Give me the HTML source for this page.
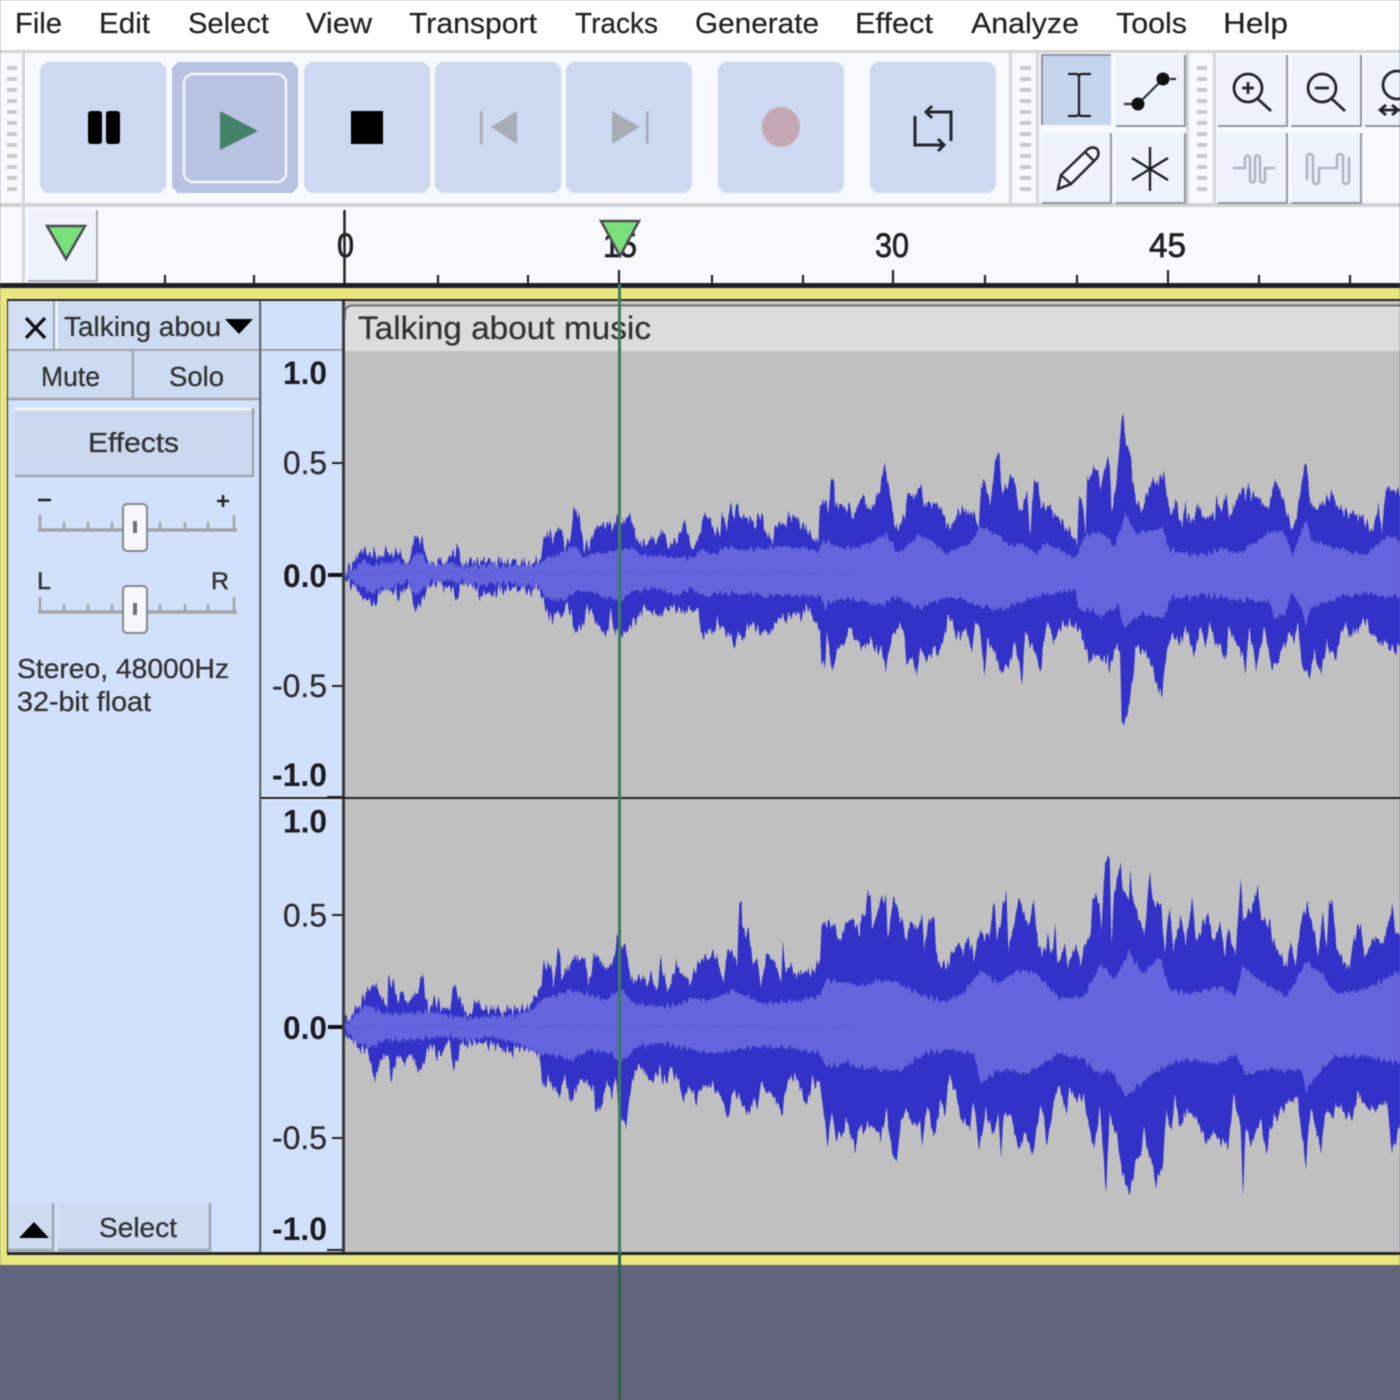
<!DOCTYPE html>
<html><head><meta charset="utf-8"><title>Audacity</title>
<style>
html,body{margin:0;padding:0;background:#62647e;width:1400px;height:1400px;overflow:hidden}
svg{display:block}
#root{filter:blur(.55px)}
text{font-family:"Liberation Sans",sans-serif;fill:#2a2a2e}
.m{font-size:29px;fill:#222;stroke:#222;stroke-width:.2px}
.s{font-size:28px;fill:#333;stroke:#333;stroke-width:.3px}
.r{font-size:32px;fill:#2d2d33;stroke:#2d2d33;stroke-width:.3px}
.l{font-size:34px;fill:#222;stroke:#222;stroke-width:.7px}
.b{font-weight:bold;fill:#1c1c22;stroke:none}
.o{fill:#3232c8}.i{fill:#6464dc}
</style></head><body>
<svg id="root" width="1400" height="1400" viewBox="0 0 1400 1400" xmlns="http://www.w3.org/2000/svg">
<defs>
<filter id="jo" filterUnits="userSpaceOnUse" x="345" y="351" width="1055" height="901" color-interpolation-filters="sRGB">
<feTurbulence type="fractalNoise" baseFrequency="0.42 0.002" numOctaves="2" seed="3" result="n"/>
<feColorMatrix in="n" type="matrix" values="1 0 0 0 0  0 0 0 0 .5  0 0 0 0 .5  0 0 0 0 1" result="m"/>
<feDisplacementMap in="SourceGraphic" in2="m" scale="24" xChannelSelector="G" yChannelSelector="R"/>
</filter>
<filter id="ji" filterUnits="userSpaceOnUse" x="345" y="351" width="1055" height="901" color-interpolation-filters="sRGB">
<feTurbulence type="fractalNoise" baseFrequency="0.36 0.002" numOctaves="2" seed="11" result="n"/>
<feColorMatrix in="n" type="matrix" values="1 0 0 0 0  0 0 0 0 .5  0 0 0 0 .5  0 0 0 0 1" result="m"/>
<feDisplacementMap in="SourceGraphic" in2="m" scale="14" xChannelSelector="G" yChannelSelector="R"/>
</filter>
</defs>
<rect width="1400" height="1400" fill="#62647e"/>
<!-- menu -->
<rect width="1400" height="51" fill="#fff"/>
<rect y="50" width="1400" height="3" fill="#d4d4d4"/>
<text class="m" x="15" y="33" textLength="47" lengthAdjust="spacingAndGlyphs">File</text>
<text class="m" x="99" y="33" textLength="51" lengthAdjust="spacingAndGlyphs">Edit</text>
<text class="m" x="188" y="33" textLength="81" lengthAdjust="spacingAndGlyphs">Select</text>
<text class="m" x="306" y="33" textLength="66" lengthAdjust="spacingAndGlyphs">View</text>
<text class="m" x="409" y="33" textLength="128" lengthAdjust="spacingAndGlyphs">Transport</text>
<text class="m" x="575" y="33" textLength="83" lengthAdjust="spacingAndGlyphs">Tracks</text>
<text class="m" x="695" y="33" textLength="124" lengthAdjust="spacingAndGlyphs">Generate</text>
<text class="m" x="855" y="33" textLength="78" lengthAdjust="spacingAndGlyphs">Effect</text>
<text class="m" x="971" y="33" textLength="108" lengthAdjust="spacingAndGlyphs">Analyze</text>
<text class="m" x="1116" y="33" textLength="71" lengthAdjust="spacingAndGlyphs">Tools</text>
<text class="m" x="1223" y="33" textLength="65" lengthAdjust="spacingAndGlyphs">Help</text>
<!-- toolbar -->
<rect y="53" width="1400" height="231" fill="#f8f9ff"/>
<rect y="203" width="1400" height="4" fill="#d2d2d4"/>
<rect x="22" y="53" width="3" height="231" fill="#d6d6d8"/>
<rect x="1009" y="53" width="3" height="151" fill="#d6d6d8"/>
<rect x="1036" y="53" width="3" height="151" fill="#d6d6d8"/>
<rect x="1186" y="53" width="3" height="151" fill="#d6d6d8"/>
<rect x="1213" y="53" width="3" height="151" fill="#d6d6d8"/>
<g stroke="#c9c9cc" stroke-width="4" fill="none">
<path d="M7 68H17M7 79H17M7 90H17M7 101H17M7 112H17M7 123H17M7 134H17M7 145H17M7 156H17M7 167H17M7 178H17M7 189H17"/>
<path d="M1020 68H1031M1020 79H1031M1020 90H1031M1020 101H1031M1020 112H1031M1020 123H1031M1020 134H1031M1020 145H1031M1020 156H1031M1020 167H1031M1020 178H1031M1020 189H1031"/>
<path d="M1197 68H1207M1197 79H1207M1197 90H1207M1197 101H1207M1197 112H1207M1197 123H1207M1197 134H1207M1197 145H1207M1197 156H1207M1197 167H1207M1197 178H1207M1197 189H1207"/>
</g>
<!-- transport buttons -->
<g fill="#cdd9f0">
<path d="M46 62H160L166 68V187L160 193H46L40 187V68Z"/>
<path fill="#b8c2e2" d="M178 62H292L298 68V187L292 193H178L172 187V68Z"/>
<path d="M310 62H424L430 68V187L424 193H310L304 187V68Z"/>
<path d="M441 62H555L561 68V187L555 193H441L435 187V68Z"/>
<path d="M572 62H686L692 68V187L686 193H572L566 187V68Z"/>
<path d="M724 62H838L844 68V187L838 193H724L718 187V68Z"/>
<path d="M876 62H990L996 68V187L990 193H876L870 187V68Z"/>
</g>
<rect x="184" y="74" width="102" height="108" rx="9" fill="none" stroke="#f4f6ff" stroke-width="2.5"/>
<rect x="88" y="111" width="14" height="33" rx="3" fill="#000"/><rect x="106" y="111" width="14" height="33" rx="3" fill="#000"/>
<path d="M220 111L258 131L220 150Z" fill="#44826a"/>
<rect x="351" y="111" width="32" height="33" fill="#000"/>
<rect x="480" y="111" width="2.5" height="33" fill="#a7acb5"/><path d="M517 111V144L491 127Z" fill="#a7acb5"/>
<rect x="646" y="111" width="2.5" height="33" fill="#a7acb5"/><path d="M612 111V144L640 127Z" fill="#a7acb5"/>
<ellipse cx="781" cy="127" rx="19" ry="20" fill="#c6a7b6"/>
<g fill="none" stroke="#25282e" stroke-width="3">
<path d="M926 112H951V141M915 116V145H942"/>
<path d="M932 106L926 112L932 118M938 139L944 145L938 151"/>
</g>
<!-- tools buttons -->
<g fill="#edf2fd">
<rect x="1116" y="55" width="69" height="71"/><rect x="1042" y="133" width="69" height="70"/><rect x="1116" y="133" width="69" height="70"/>
<rect x="1218" y="55" width="69" height="71"/><rect x="1291" y="55" width="69" height="71"/><rect x="1365" y="55" width="35" height="71"/>
<rect x="1218" y="133" width="69" height="70"/><rect x="1291" y="133" width="69" height="70"/>
</g>
<rect x="1042" y="55" width="69" height="70" fill="#c5d5ee"/>
<path d="M1042 125V55H1111" fill="none" stroke="#8d93a0" stroke-width="2"/>
<g fill="none" stroke="#9197a3" stroke-width="2">
<path d="M1116 126H1185V55M1042 203H1111V133M1116 203H1185V133M1218 126H1287V55M1291 126H1361V55M1365 126H1400M1218 203H1287V133M1291 203H1361V133"/>
</g>
<g fill="none" stroke="#1d1d20" stroke-width="2.2">
<path d="M1068 74H1076Q1079 74 1079 77V113Q1079 116 1076 116H1068M1091 74H1082Q1079 74 1079 77M1091 116H1082Q1079 116 1079 113"/>
<path d="M1138 104L1163 79M1124 104H1132M1170 79H1176" stroke="#333"/>
<path d="M1150 147V191M1132 158L1168 180M1168 158L1132 180" stroke-width="2.3"/>
<path d="M1058 189L1061 175L1088 149Q1093 146 1097 149Q1100 153 1097 158L1071 184Z" fill="#f4f7ff" stroke="#2a2a2e" stroke-width="2.6"/>
<path d="M1061 175L1071 184M1085 152L1094 161" stroke="#2a2a2e" stroke-width="2.4"/>
</g>
<g fill="none" stroke="#25272c" stroke-width="2.8">
<circle cx="1248" cy="88" r="14"/><path d="M1258 99L1271 111M1242 88H1254M1248 82V94"/>
<circle cx="1322" cy="88" r="14"/><path d="M1332 99L1345 111M1315 88H1329"/>
<circle cx="1397" cy="85" r="14"/><path d="M1380 110H1400M1386 105L1380 110L1386 115M1392 105L1398 110L1392 115"/>
</g>
<circle cx="1138" cy="104" r="6.500" fill="#111"/><circle cx="1163" cy="79" r="6.500" fill="#111"/>
<g fill="none" stroke="#b2b6c1" stroke-width="2.6">
<path d="M1233 168H1245V158A2.500 2.500 0 0 1 1250 158V180A2.500 2.500 0 0 0 1255 180V158A2.500 2.500 0 0 1 1260 158V180A2.500 2.500 0 0 0 1265 180V168H1275"/>
<path d="M1307 180V157A3 3 0 0 1 1313 157V181A3 3 0 0 0 1319 181V168H1337V157A3 3 0 0 1 1343 157V181A3 3 0 0 0 1349 181V157"/>
</g>
<!-- ruler -->
<rect x="28" y="210" width="69" height="71" fill="#edf2fd"/>
<path d="M28 281H97V210" fill="none" stroke="#a9adb6" stroke-width="2"/>
<path d="M47 226H85L66 259Z" fill="#7be07b" stroke="#4c4c50" stroke-width="2.5"/>
<g stroke="#222" stroke-width="2.2">
<path d="M344.500 210V284" stroke-width="2.500"/>
<path d="M165 275V283M254 275V283M438 275V283M528 275V283M712 275V283M803 275V283M985 275V283M1077 275V283M1259 275V283M1350 275V283"/>
<path d="M619 270V283M893 270V283M1168 270V283"/>
</g>
<text class="l" x="337" y="257" textLength="17" lengthAdjust="spacingAndGlyphs">0</text>
<text class="l" x="603" y="257" textLength="34" lengthAdjust="spacingAndGlyphs">15</text>
<text class="l" x="875" y="257" textLength="34" lengthAdjust="spacingAndGlyphs">30</text>
<text class="l" x="1149" y="257" textLength="37" lengthAdjust="spacingAndGlyphs">45</text>
<path d="M601 221H639L620 256Z" fill="#7be07b" stroke="#4c4c50" stroke-width="2.5"/>
<!-- track frame -->
<rect y="283" width="1400" height="5" fill="#1e1e2a"/>
<rect y="288" width="1400" height="977" fill="#e9e67f"/>
<rect x="7" y="299" width="1393" height="956" fill="#26262a"/>
<!-- panel -->
<rect x="8" y="301" width="252" height="951" fill="#d2e1fb"/>
<rect x="261" y="301" width="81" height="951" fill="#d2e1fb"/>
<path d="M260.200 301V1252" stroke="#55565c" stroke-width="2"/>
<rect x="8" y="301" width="47" height="48" fill="#d2dff5"/>
<rect x="55" y="301" width="3" height="48" fill="#edf2fd"/>
<rect x="58" y="301" width="201" height="48" fill="#cddbf1"/>
<path d="M54 301V350M8 350H259" stroke="#9fa4ae" stroke-width="2"/>
<rect x="8" y="351" width="124" height="47" fill="#cddbf1"/><rect x="135" y="351" width="124" height="47" fill="#cddbf1"/>
<path d="M133 351V398M8 399H259" stroke="#9fa4ae" stroke-width="2.500"/>
<path d="M261 350H342" stroke="#9fa4ae" stroke-width="2"/>
<path d="M26 318L45 338M45 318L26 338" stroke="#111" stroke-width="3.200"/>
<text class="s" x="64" y="336" textLength="157" lengthAdjust="spacingAndGlyphs">Talking abou</text>
<path d="M225 319H253L239 334Z" fill="#000"/>
<text class="s" x="41" y="386" textLength="59" lengthAdjust="spacingAndGlyphs">Mute</text>
<text class="s" x="169" y="386" textLength="55" lengthAdjust="spacingAndGlyphs">Solo</text>
<rect x="15" y="408" width="238" height="69" fill="#cbd8ef"/>
<path d="M15 409H253" stroke="#eef3fd" stroke-width="3"/>
<path d="M15 476H253V408" fill="none" stroke="#9ea4b0" stroke-width="2.500"/>
<text class="s" x="88" y="452" textLength="91" lengthAdjust="spacingAndGlyphs">Effects</text>
<!-- sliders -->
<path d="M38 500H51M217 501H229M223 495V507" stroke="#222" stroke-width="2.500"/>
<text x="37" y="589" font-size="24" textLength="14" lengthAdjust="spacingAndGlyphs" style="fill:#333;stroke:#333;stroke-width:.5px">L</text>
<text x="211" y="589" font-size="24" textLength="18" lengthAdjust="spacingAndGlyphs" style="fill:#333;stroke:#333;stroke-width:.5px">R</text>
<g fill="none" stroke="#a2a4a8" stroke-width="2.500">
<path d="M40 515V530M64 522V530M88 522V530M112 522V530M160 522V530M185 522V530M208 522V530M234 515V530"/>
<path d="M38 530H237" stroke-width="3.500"/>
<path d="M40 597V612M64 604V612M88 604V612M112 604V612M160 604V612M185 604V612M208 604V612M234 597V612"/>
<path d="M38 612H237" stroke-width="3.500"/>
</g>
<rect x="123" y="504" width="24" height="47" rx="4" fill="#f6f7fb" stroke="#85878c" stroke-width="2"/><rect x="133" y="521" width="4" height="12" fill="#70747c"/>
<rect x="123" y="586" width="24" height="47" rx="4" fill="#f6f7fb" stroke="#85878c" stroke-width="2"/><rect x="133" y="603" width="4" height="12" fill="#70747c"/>
<text class="s" x="17" y="678" textLength="212" lengthAdjust="spacingAndGlyphs">Stereo, 48000Hz</text>
<text class="s" x="17" y="711" textLength="134" lengthAdjust="spacingAndGlyphs">32-bit float</text>
<!-- bottom buttons -->
<rect x="8" y="1203" width="45" height="47" fill="#cddbf1"/><rect x="58" y="1203" width="152" height="47" fill="#cddbf1"/>
<path d="M8 1250H53V1203M58 1250H210V1203" fill="none" stroke="#9ea4b0" stroke-width="2.500"/>
<path d="M19 1238L34 1222L49 1238Z" fill="#000"/>
<text class="s" x="99" y="1237" textLength="78" lengthAdjust="spacingAndGlyphs">Select</text>
<!-- vertical ruler -->
<g>
<text class="r b" x="283" y="384" textLength="44" lengthAdjust="spacingAndGlyphs">1.0</text>
<text class="r" x="283" y="474" textLength="44" lengthAdjust="spacingAndGlyphs">0.5</text>
<text class="r b" x="283" y="587" textLength="44" lengthAdjust="spacingAndGlyphs">0.0</text>
<text class="r" x="272" y="697" textLength="55" lengthAdjust="spacingAndGlyphs">-0.5</text>
<text class="r b" x="272" y="786" textLength="55" lengthAdjust="spacingAndGlyphs">-1.0</text>
<text class="r b" x="283" y="832.500" textLength="44" lengthAdjust="spacingAndGlyphs">1.0</text>
<text class="r" x="283" y="926.500" textLength="44" lengthAdjust="spacingAndGlyphs">0.5</text>
<text class="r b" x="283" y="1039" textLength="44" lengthAdjust="spacingAndGlyphs">0.0</text>
<text class="r" x="272" y="1149" textLength="55" lengthAdjust="spacingAndGlyphs">-0.5</text>
<text class="r b" x="272" y="1240" textLength="55" lengthAdjust="spacingAndGlyphs">-1.0</text>
</g>
<path d="M332 463H342M332 686H342M327 797H342M332 915H342M332 1138H342M327 1250H342" stroke="#222" stroke-width="2"/>
<path d="M328 575H342M328 1027H342" stroke="#111" stroke-width="4"/>
<!-- wave area -->
<rect x="342" y="301" width="3" height="951" fill="#3a3a3e"/>
<rect x="345" y="301" width="1055" height="5" fill="#c6c6c6"/>
<rect x="345" y="351" width="1055" height="901" fill="#c0c0c0"/>
<rect x="345" y="306" width="1055" height="45" fill="#dcdcdc"/>
<path d="M345 320V312Q345 307 351 305.500H1400" fill="none" stroke="#666" stroke-width="1.800"/>
<text x="358" y="339" font-size="32" textLength="293" lengthAdjust="spacingAndGlyphs" style="fill:#333;stroke:#333;stroke-width:.25px">Talking about music</text>
<svg x="345" y="351" width="1055" height="901" viewBox="345 351 1055 901">
<g filter="url(#jo)">
<!-- outer channel 1 -->
<g class="o" transform="translate(340,400) scale(.338,.3333)">
<path d="M15,520 25,500 40,490 50,470 62,445 75,445 82,470 95,465 102,450 115,478 130,465 135,442 145,465 155,458 175,458 190,485 208,490 213,430 222,408 242,420 252,460 265,495 285,495 292,478 305,490 320,480 330,462 340,470 345,432 352,440 356,500 372,490 385,482 400,490 418,475 432,490 440,478 460,490 480,485 500,490 515,475 530,492 555,488 570,492 590,485 600,440 607,405 618,400 630,420 640,395 655,385 665,440 685,400 690,325 700,335 715,385 722,445 745,425 757,375 775,380 790,368 805,385 820,358 840,365 860,345 868,385 885,430 905,435 925,410 935,435 950,392 962,400 970,440 1000,420 1020,358 1030,410 1040,445 1060,420 1075,345 1092,350 1105,395 1125,395 1130,345 1145,380 1155,310 1163,350 1178,310 1185,355 1215,350 1225,385 1240,345 1252,345 1255,400 1270,400 1280,430 1288,378 1320,370 1325,350 1345,350 1365,375 1380,385 1395,410 1415,425 1420,320 1435,295 1445,340 1452,240 1462,240 1465,320 1490,310 1500,340 1508,305 1515,360 1525,330 1550,285 1560,330 1568,320V520H15Z"/>
<path d="M15,525 25,545 50,565 70,590 100,620 115,585 135,565 165,570 170,605 190,570 208,545 215,590 222,635 235,605 250,600 260,555 285,548 310,555 330,570 345,600 355,570 360,548 385,548 410,580 440,585 465,575 490,570 515,560 565,575 590,565 605,620 615,640 625,665 640,640 660,650 668,600 685,640 695,710 712,680 735,620 755,660 775,695 795,690 800,640 815,705 825,705 850,690 885,650 905,620 920,640 945,650 965,620 1000,635 1060,625 1065,660 1075,720 1090,680 1105,715 1115,670 1150,700 1170,750 1180,680 1195,725 1205,670 1260,700 1290,670 1330,650 1365,650 1380,625 1405,660 1420,690 1425,790 1435,790 1440,700 1457,818 1470,750 1490,720 1510,690 1530,730 1568,735V520H15Z"/>
</g>
<g class="o" transform="translate(860,400) scale(.3444,.3333)">
<path d="M0,300 10,285 16,345 25,350 40,310 60,265 70,195 76,195 80,250 90,295 100,380 115,380 130,345 138,280 148,285 155,300 178,250 185,320 200,305 225,315 245,345 258,395 270,365 290,330 310,335 330,335 345,390 352,245 365,250 378,320 392,180 405,160 410,270 425,265 438,230 450,235 462,345 485,280 495,400 505,245 518,245 525,320 550,320 575,355 600,385 630,425 636,295 645,295 655,405 660,230 672,225 680,210 692,210 698,270 712,190 725,185 730,330 745,250 758,80 765,45 772,125 785,160 792,250 805,310 820,330 845,245 870,245 882,210 892,300 905,350 915,295 935,380 945,305 950,360 975,350 982,295 990,350 1030,350 1035,285 1045,340 1062,285 1072,350 1100,290 1110,260 1120,290 1128,245 1135,295 1150,285 1170,310 1185,330 1205,240 1220,270 1240,340 1255,390 1270,340 1290,195 1297,195 1305,290 1320,330 1345,310 1370,280 1390,325 1420,340 1450,345 1490,395 1505,310 1515,395 1528,260 1545,270 1560,270 1568,290V520H0Z"/>
<path d="M0,735 15,735 30,720 70,770 75,815 85,740 115,675 130,700 135,780 155,780 165,830 175,750 190,780 215,745 225,770 255,660 270,660 280,705 310,690 325,750 335,660 350,700 360,830 370,720 395,770 405,800 425,810 440,790 450,715 470,850 480,690 510,770 525,810 540,670 565,715 590,680 610,670 630,680 665,770 720,775 722,830 740,745 755,750 760,960 768,975 778,920 795,840 800,730 845,790 860,850 875,890 890,770 905,700 935,725 945,690 975,760 985,680 1005,735 1015,670 1035,730 1065,785 1070,680 1100,740 1120,810 1130,690 1150,800 1175,690 1195,800 1215,780 1250,700 1260,720 1270,670 1285,800 1305,820 1320,760 1340,825 1355,740 1380,770 1405,680 1430,700 1470,660 1490,710 1530,730 1535,760 1568,740V520H0Z"/>
</g>
<!-- outer channel 2 -->
<g class="o" transform="translate(340,840) scale(.338,.3333)">
<path d="M15,530 25,545 40,515 60,495 80,450 90,445 105,430 112,450 130,485 140,500 143,420 160,435 170,480 185,455 200,490 215,470 235,455 238,410 248,410 252,470 262,510 280,480 300,500 325,510 335,440 345,450 360,495 385,530 400,485 410,480 420,510 445,510 470,505 480,525 490,505 530,510 560,500 580,465 595,440 602,370 625,380 632,430 645,335 652,340 655,420 680,370 700,355 725,355 735,430 755,340 770,365 785,380 805,380 820,295 830,315 845,310 860,420 880,420 900,410 910,440 920,395 935,460 950,360 960,420 970,450 980,430 995,365 1005,400 1025,405 1035,435 1060,365 1085,355 1105,340 1120,370 1135,430 1145,330 1165,340 1175,370 1182,180 1188,180 1190,260 1210,285 1222,370 1235,350 1245,440 1262,340 1285,365 1305,420 1310,305 1315,380 1340,385 1350,410 1380,395 1400,395 1420,360 1425,250 1445,250 1465,260 1475,310 1500,240 1525,245 1535,290 1545,225 1560,230 1565,165 1568,170V560H15Z"/>
<path d="M15,600 30,590 55,620 80,630 95,690 105,720 115,670 130,650 140,640 150,710 160,700 170,640 190,670 210,640 235,700 250,660 265,610 290,650 325,600 335,690 350,650 360,610 420,610 470,620 510,635 540,620 590,640 600,750 615,720 650,765 665,715 685,785 710,720 750,745 755,805 775,800 790,720 805,775 815,700 825,810 845,870 855,790 870,690 890,670 920,735 945,690 965,725 975,680 1000,720 1015,785 1035,740 1055,780 1075,735 1110,745 1150,820 1165,750 1185,790 1210,825 1225,770 1235,810 1245,735 1280,770 1310,820 1320,730 1345,700 1380,790 1400,720 1420,740 1430,810 1442,915 1455,820 1470,900 1500,850 1525,925 1540,850 1568,810V560H15Z"/>
</g>
<g class="o" transform="translate(860,840) scale(.3444,.3333)">
<path d="M0,225 10,260 22,165 30,165 35,265 45,235 62,180 75,165 80,295 95,190 105,190 115,250 125,225 132,310 147,245 170,270 180,225 187,330 197,250 215,225 222,345 235,375 260,375 265,330 275,330 290,305 300,340 315,295 330,355 348,265 358,290 375,290 390,180 398,310 415,200 425,165 432,330 445,270 460,165 470,200 490,270 505,170 512,280 530,345 545,300 560,340 567,245 573,375 595,320 605,375 628,310 640,380 655,300 670,280 675,170 695,180 700,280 712,55 725,55 730,315 738,160 757,75 765,150 780,170 785,95 790,180 810,230 825,290 835,180 843,95 850,180 875,195 885,335 900,195 910,335 930,225 945,315 965,170 975,300 1010,225 1025,300 1045,255 1060,340 1070,270 1090,340 1105,120 1113,240 1135,220 1155,135 1165,240 1190,250 1200,310 1240,380 1250,305 1265,370 1280,250 1300,190 1310,240 1330,340 1345,220 1355,340 1362,180 1372,190 1385,330 1420,390 1435,285 1455,260 1465,350 1490,290 1520,310 1545,195 1552,260 1568,290V555H0Z"/>
<path d="M0,810 10,890 30,840 60,895 78,810 95,950 108,950 120,840 135,815 155,860 175,845 180,915 195,785 215,900 235,775 245,825 260,710 280,775 295,840 320,850 330,775 345,940 365,810 385,885 400,830 410,935 420,820 440,830 460,935 480,875 500,950 510,880 525,790 545,915 560,790 580,735 600,825 605,760 650,775 660,840 680,935 695,800 715,1060 725,820 745,880 770,1040 785,1060 800,960 815,945 825,875 860,1035 880,970 890,810 905,880 915,770 930,860 950,810 985,855 1005,900 1030,880 1045,910 1070,910 1085,775 1105,860 1112,1050 1120,850 1135,905 1165,850 1180,950 1195,840 1230,800 1270,775 1285,900 1295,970 1310,800 1340,945 1350,810 1375,840 1380,775 1410,830 1430,840 1445,760 1480,815 1530,790 1545,935 1568,850V555H0Z"/>
</g>
</g>
<g filter="url(#ji)">
<!-- inner (rms) -->
<g class="i" transform="translate(340,400) scale(.338,.3333)">
<path d="M15,520 40,510 70,480 100,495 130,490 170,485 200,495 215,470 240,460 258,490 300,495 340,490 360,500 420,495 500,497 590,495 610,470 640,465 690,440 720,470 760,460 800,455 830,445 870,450 900,465 950,470 1000,475 1040,475 1070,450 1110,465 1140,440 1200,450 1260,445 1310,440 1380,445 1418,455 1430,420 1470,440 1510,445 1568,435V520H15Z"/>
<path d="M15,525 50,555 100,575 150,565 200,545 225,590 250,565 270,545 350,545 420,555 500,550 590,560 610,590 660,600 720,570 780,590 830,600 880,570 930,565 1000,590 1040,565 1075,590 1130,580 1200,580 1260,590 1340,585 1418,590 1435,620 1480,595 1530,600 1568,610V520H15Z"/>
</g>
<g class="i" transform="translate(860,400) scale(.3444,.3333)">
<path d="M0,440 50,420 75,400 110,460 170,405 210,425 250,460 320,430 350,380 400,405 440,440 470,430 510,460 540,430 600,460 625,475 650,410 700,395 740,440 770,340 800,400 880,385 900,450 950,460 1000,465 1050,445 1100,460 1190,395 1230,395 1255,465 1295,360 1310,420 1400,450 1470,465 1530,410 1568,420V520H0Z"/>
<path d="M0,595 50,620 110,590 175,625 250,590 300,600 350,620 400,630 460,610 510,590 625,570 635,620 700,650 750,620 770,685 820,640 880,660 900,595 1000,585 1100,600 1190,600 1200,650 1235,650 1255,575 1280,620 1295,680 1310,620 1400,590 1470,580 1530,595 1568,590V510H0Z"/>
</g>
<g class="i" transform="translate(340,840) scale(.338,.3333)">
<path d="M15,555 50,520 80,495 130,520 200,520 260,515 320,525 385,535 440,530 520,525 570,510 600,475 640,465 680,450 740,465 790,480 830,445 870,490 940,500 1000,495 1040,475 1100,480 1160,450 1250,490 1340,485 1415,470 1440,420 1510,430 1568,445V560H15Z"/>
<path d="M15,570 50,605 90,625 130,600 200,600 260,595 330,590 380,605 440,590 510,605 590,640 640,650 680,660 740,630 800,640 830,670 880,620 960,610 1040,630 1100,640 1160,630 1250,620 1340,625 1420,640 1440,680 1500,670 1568,690V560H15Z"/>
</g>
<g class="i" transform="translate(860,840) scale(.3444,.3333)">
<path d="M0,440 60,420 100,425 190,470 250,485 300,460 350,390 400,430 460,390 510,400 580,475 650,470 700,370 740,420 780,335 820,400 870,350 900,450 960,460 1050,440 1090,470 1110,380 1160,420 1240,470 1295,365 1340,400 1380,460 1460,450 1520,420 1568,390V555H0Z"/>
<path d="M0,670 60,690 120,690 190,640 260,630 330,640 350,730 410,690 480,700 520,680 580,640 650,660 690,700 730,690 770,770 830,720 880,680 950,660 1040,670 1090,645 1120,700 1200,690 1280,690 1295,750 1340,690 1380,650 1470,650 1568,670V555H0Z"/>
</g>
</g>
</svg>
<!-- channel divider -->
<rect x="261" y="797" width="1139" height="2" fill="#222"/>
<rect x="261" y="799" width="81" height="1" fill="#eef3fd"/>
<!-- playhead -->
<rect x="618" y="284" width="3" height="968" fill="#3f7a5a"/>
<rect x="618" y="1252" width="3" height="148" fill="#2c6448"/>
</svg>
</body></html>
